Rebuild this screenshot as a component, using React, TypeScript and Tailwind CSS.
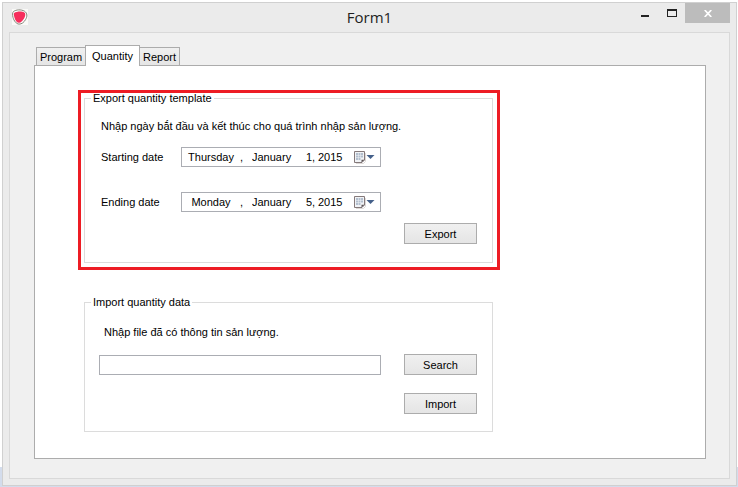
import { useState } from "react";

function AppIcon() {
  return (
    <svg width="16" height="16" viewBox="0 0 16 16" aria-hidden="true">
      <rect width="16" height="16" fill="#fafaf8" />
      <path
        d="M1.500 2.500C4 .6 9 .2 12.500 2.200c3 1.900 2.900 5.500 1.100 8.300C12 13.300 9.700 15.200 7 15.100 4.300 15 2 11.900 1 8.400.4 6.200.3 3.600 1.500 2.500Z"
        fill="#fdfdfb"
        stroke="#85857a"
        strokeWidth="1"
      />
      <path
        d="M2.200 4C4.800 2.200 9.800 2 12.300 3.400c1.600 1 1 4.100-.4 6.400C10.500 12.100 8.900 13.800 7 13.800c-1.900 0-3.500-2-4.400-4.900C1.900 6.800 1.500 4.800 2.200 4Z"
        fill="#f62e5c"
      />
    </svg>
  );
}

function CalendarIcon() {
  return (
    <svg width="22" height="14" viewBox="0 0 22 14" aria-hidden="true">
      <path d="M2 13.500h7.500l2-2V3" fill="none" stroke="#dcd8d6" />
      <path d="M.5 1.500h10v8.500l-2.500 2.500H.5Z" fill="#f1f3f6" stroke="#84797a" />
      <path d="M7.500 12.500V9.800h3Z" fill="#5c5456" />
      <path
        d="M2 3h2v2H2zM4.500 3h2v2h-2zM7 3h2v2H7zM2 5.500h2v2H2zM4.500 5.500h2v2h-2zM7 5.500h2v2H7zM2 8h2v2H2zM4.500 8h2v2h-2z"
        fill="#b3bfce"
      />
      <path d="M12.500 5h8l-4 4Z" fill="#44608a" />
    </svg>
  );
}

const segment = "min-w-0 bg-transparent p-0 outline-none";

function DateField({ id, label, weekday, day }: { id: string; label: string; weekday: string; day: string }) {
  return (
    <div className="flex items-center">
      <label htmlFor={id} className="w-20 shrink-0">
        {label}
      </label>
      <div className="flex h-5 w-[200px] items-center border border-[#abadb3] bg-white">
        <input id={id} defaultValue={weekday} className={`${segment} w-[58px] text-center`} />
        <span className="w-3">,</span>
        <input aria-label={`${label} month`} defaultValue="January" className={`${segment} w-12`} />
        <input aria-label={`${label} day`} defaultValue={day} className={`${segment} w-3 text-right`} />
        <span className="w-[6px]">,</span>
        <input aria-label={`${label} year`} defaultValue="2015" className={`${segment} w-9`} />
        <button type="button" aria-label={`Choose ${label.toLowerCase()}`} className="flex">
          <CalendarIcon />
        </button>
      </div>
    </div>
  );
}

function PushButton({ children }: { children: string }) {
  return (
    <button
      type="button"
      className="h-[21px] w-[73px] border border-[#acacac] bg-linear-to-b from-[#f0f0f0] to-[#e5e5e5] leading-4"
    >
      {children}
    </button>
  );
}

const tabs = [
  { name: "Program", width: "w-[50px]" },
  { name: "Quantity", width: "w-[55px]" },
  { name: "Report", width: "w-[41px]" },
];

export default function App() {
  const [active, setActive] = useState("Quantity");

  return (
    <div className="flex min-h-screen flex-col bg-linear-to-t from-[#d3dcec] from-[20px] to-white to-[20px] pt-[2px] pr-px pb-px pl-[2px] font-['Liberation_Sans','Roboto',sans-serif] text-[11px] leading-4 text-black">
      <div className="flex flex-1 flex-col border border-[#d0d0d0] bg-[#ebebeb] px-[6px] pb-[6px]">
        <header className="grid h-[29px] grid-cols-[1fr_auto_1fr] items-start">
          <div className="pt-[6px] pl-[3px]">
            <AppIcon />
          </div>
          <h1 className="pt-1 font-['Open_Sans',sans-serif] text-[15px] leading-5 text-[#1e1e1e]">Form1</h1>
          <div className="flex h-5 justify-end">
            <button type="button" aria-label="Minimize" className="flex w-[27px] justify-center pt-3">
              <span className="h-[2px] w-2 bg-[#222]" />
            </button>
            <button type="button" aria-label="Maximize" className="flex w-[27px] justify-center pt-[6px]">
              <span className="h-2 w-[10px] border border-t-2 border-[#222]" />
            </button>
            <button type="button" aria-label="Close" className="flex w-[45px] items-center justify-center bg-[#bcbcbc]">
              <svg width="8" height="7" viewBox="0 0 8 7" aria-hidden="true">
                <path d="M.7 0 7.300 7M7.300 0 .7 7" stroke="#fff" strokeWidth="1.700" />
              </svg>
            </button>
          </div>
        </header>

        <main className="flex flex-1 flex-col border border-[#d9d9d9] bg-[#f0f0f0] pt-3 pr-[23px] pb-[19px] pl-6">
          <div role="tablist" className="flex h-5 items-end pl-[2px]">
            {tabs.map(({ name, width }) => (
              <button
                key={name}
                type="button"
                role="tab"
                aria-selected={name === active}
                onClick={() => setActive(name)}
                className={`${width} ${
                  name === active
                    ? "relative -mx-px -mb-px h-[21px] border border-b-0 border-[#acacac] bg-white pb-px"
                    : "h-[18px] border border-b-0 border-[#acacac] bg-linear-to-b from-[#f0f0f0] to-[#e5e5e5]"
                }`}
              >
                {name}
              </button>
            ))}
          </div>

          <div role="tabpanel" className="flex-1 border border-[#acacac] bg-white pt-[25px] pb-[26px] pl-[49px]">
            <div className="relative w-[409px]">
              <fieldset className="border border-[#dcdcdc] pr-[15px] pb-[18px] pl-4">
                <legend className="-ml-[10px] px-[2px] pt-px pb-px leading-[13px]">Export quantity template</legend>
                <p className="pt-3">Nhập ngày bắt đầu và kết thúc cho quá trình nhập sản lượng.</p>
                <div className="flex flex-col gap-[25px] pt-[13px]">
                  <DateField id="start" label="Starting date" weekday="Thursday" day="1" />
                  <DateField id="end" label="Ending date" weekday="Monday" day="5" />
                </div>
                <div className="flex justify-end pt-[11px]">
                  <PushButton>Export</PushButton>
                </div>
              </fieldset>
              <div className="pointer-events-none absolute -top-px -right-[7px] -bottom-[7px] -left-[6px] border-3 border-[#ed1c24]" />
            </div>

            <fieldset className="mt-8 w-[409px] border border-[#dcdcdc] pr-[15px] pb-[17px] pl-[14px]">
              <legend className="-ml-2 px-[2px] pt-px pb-px leading-[13px]">Import quantity data</legend>
              <label htmlFor="file" className="block pt-[14px] pl-[5px]">
                Nhập file đã có thông tin sản lượng.
              </label>
              <div className="flex items-end gap-[23px] pt-[14px]">
                <input id="file" type="text" className="h-5 min-w-0 flex-1 border border-[#abadb3] bg-white px-1" />
                <PushButton>Search</PushButton>
              </div>
              <div className="flex justify-end pt-[18px]">
                <PushButton>Import</PushButton>
              </div>
            </fieldset>
          </div>
        </main>
      </div>
    </div>
  );
}
